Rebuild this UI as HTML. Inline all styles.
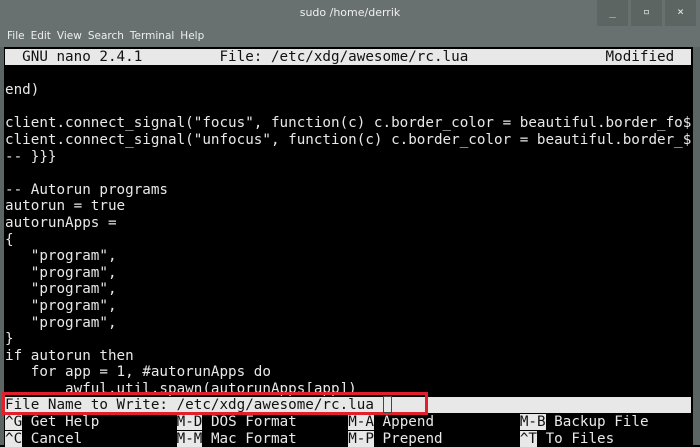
<!DOCTYPE html>
<html><head><meta charset="utf-8"><style>
*{margin:0;padding:0}
body{width:700px;height:445px;overflow:hidden;background:#000;position:relative;font-family:"DejaVu Sans Mono","Liberation Mono",monospace}
#title{position:absolute;left:0;top:0;width:700px;height:26px;background:#68716f;color:#f0f0f0;font:11px "DejaVu Sans","Liberation Sans",sans-serif;text-align:center;line-height:26px}
.btn{position:absolute;top:0;height:26px;width:31px;background:#5d6563;color:#eee;font-size:11px;line-height:24px;text-align:center}
#menu{position:absolute;left:0;top:26px;width:700px;height:21px;background:#68716f;color:#eee;font:10.5px "DejaVu Sans","Liberation Sans",sans-serif;line-height:21px}
#menu span{margin-left:7px;margin-right:-1px}
#term{position:absolute;left:4px;top:47px;width:689px;height:398px;background:#000}
#sb{position:absolute;left:693px;top:47px;width:7px;height:398px;background:#5b6563}
#lb{position:absolute;left:0;top:47px;width:4px;height:398px;background:#5b6563}
pre{position:absolute;left:5px;top:49px;font-size:14.25px;line-height:16.6px;color:#e8e8e8;font-family:"DejaVu Sans Mono","Liberation Mono",monospace;white-space:pre}
.inv{background:#e8e8e8;color:#111}
.rb{position:absolute;left:2px;top:392px;width:420px;height:17px;border:3px solid #e0202a}
.cur{position:absolute;left:383px;top:396px;width:7px;height:15px;border:1px solid #444}
</style></head><body>
<div id="title">sudo /home/derrik</div>
<div class="btn" style="left:597px">_</div><div class="btn" style="left:631px">▫</div><div class="btn" style="left:665px">×</div>
<div id="menu"><span>File</span><span>Edit</span><span>View</span><span>Search</span><span>Terminal</span><span>Help</span></div>
<div id="lb"></div><div id="term"></div><div id="sb"></div>
<pre><span class="inv">  GNU nano 2.4.1         File: /etc/xdg/awesome/rc.lua                Modified  </span>

end)

client.connect_signal("focus", function(c) c.border_color = beautiful.border_fo$
client.connect_signal("unfocus", function(c) c.border_color = beautiful.border_$
-- }}}

-- Autorun programs
autorun = true
autorunApps =
{
   "program",
   "program",
   "program",
   "program",
   "program",
}
if autorun then
   for app = 1, #autorunApps do
       awful.util.spawn(autorunApps[app])
<span class="inv">File Name to Write: /etc/xdg/awesome/rc.lua                                     </span>
<span class="inv">^G</span> Get Help         <span class="inv">M-D</span> DOS Format      <span class="inv">M-A</span> Append          <span class="inv">M-B</span> Backup File
<span class="inv">^C</span> Cancel           <span class="inv">M-M</span> Mac Format      <span class="inv">M-P</span> Prepend         <span class="inv">^T</span> To Files</pre>
<div class="rb"></div><div class="cur"></div>
</body></html>
